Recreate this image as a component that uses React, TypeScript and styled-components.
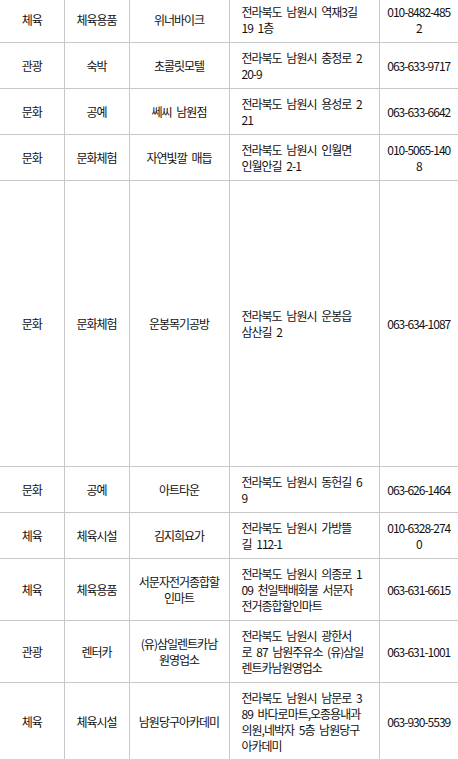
import React from 'react'
import styled, { createGlobalStyle } from 'styled-components'

const GlobalStyle = createGlobalStyle`
  html, body {
    margin: 0;
    padding: 0;
    background: #fff;
  }
  body {
    font-family: "Noto Sans CJK KR", "Noto Sans", sans-serif;
    overflow: hidden;
  }
`

const Table = styled.table`
  width: 458px;
  margin-top: -4px;
  border-collapse: collapse;
  table-layout: fixed;
  font-size: 12px;
  line-height: 16px;
  letter-spacing: -1px;
  word-spacing: 3px;
  color: #111;
`

const Col = styled.col<{ $w: number }>`
  width: ${p => p.$w}px;
`

const Row = styled.tr<{ $tall?: number }>`
  ${p => (p.$tall ? `height: ${p.$tall}px;` : '')}
`

const Cell = styled.td<{ $left?: boolean }>`
  border: 1px solid #c8c8c8;
  padding: ${p => (p.$left ? '7px 6px 6px 12px' : '7px 4px 6px')};
  text-align: ${p => (p.$left ? 'left' : 'center')};
  vertical-align: middle;
  white-space: nowrap;
  &:first-child {
    border-left: none;
  }
  &:last-child {
    border-right: none;
  }
`

const Line = styled.span`
  display: block;
`

type Place = {
  kind: string
  sub: string
  name: string[]
  addr: string[]
  tel: string[]
  tall?: number
}

const places: Place[] = [
  { kind: '체육', sub: '체육용품', name: ['위너바이크'], addr: ['전라북도 남원시 역재3길', '19 1층'], tel: ['010-8482-485', '2'] },
  { kind: '관광', sub: '숙박', name: ['초콜릿모텔'], addr: ['전라북도 남원시 충정로 2', '20-9'], tel: ['063-633-9717'] },
  { kind: '문화', sub: '공예', name: ['쎄씨 남원점'], addr: ['전라북도 남원시 용성로 2', '21'], tel: ['063-633-6642'] },
  { kind: '문화', sub: '문화체험', name: ['자연빛깔 매듭'], addr: ['전라북도 남원시 인월면', '인월안길 2-1'], tel: ['010-5065-140', '8'] },
  { kind: '문화', sub: '문화체험', name: ['운봉목기공방'], addr: ['전라북도 남원시 운봉읍', '삼산길 2'], tel: ['063-634-1087'], tall: 286 },
  { kind: '문화', sub: '공예', name: ['아트타운'], addr: ['전라북도 남원시 동헌길 6', '9'], tel: ['063-626-1464'] },
  { kind: '체육', sub: '체육시설', name: ['김지희요가'], addr: ['전라북도 남원시 가방뜰', '길 112-1'], tel: ['010-6328-274', '0'] },
  {
    kind: '체육',
    sub: '체육용품',
    name: ['서문자전거종합할', '인마트'],
    addr: ['전라북도 남원시 의종로 1', '09 천일택배화물 서문자', '전거종합할인마트'],
    tel: ['063-631-6615'],
  },
  {
    kind: '관광',
    sub: '렌터카',
    name: ['(유)삼일렌트카남', '원영업소'],
    addr: ['전라북도 남원시 광한서', '로 87 남원주유소 (유)삼일', '렌트카남원영업소'],
    tel: ['063-631-1001'],
  },
  {
    kind: '체육',
    sub: '체육시설',
    name: ['남원당구아카데미'],
    addr: ['전라북도 남원시 남문로 3', '89 바다로마트,오종용내과', '의원,네박자 5층 남원당구', '아카데미'],
    tel: ['063-930-5539'],
  },
]

const Lines = ({ items }: { items: string[] }) => (
  <>
    {items.map((t, i) => (
      <Line key={i}>{t}</Line>
    ))}
  </>
)

export default function App() {
  return (
    <>
      <GlobalStyle />
      <Table>
        <colgroup>
          <Col $w={64} />
          <Col $w={65} />
          <Col $w={100} />
          <Col $w={150} />
          <Col $w={79} />
        </colgroup>
        <tbody>
          {places.map((p, i) => (
            <Row key={i} $tall={p.tall}>
              <Cell>{p.kind}</Cell>
              <Cell>{p.sub}</Cell>
              <Cell>
                <Lines items={p.name} />
              </Cell>
              <Cell $left>
                <Lines items={p.addr} />
              </Cell>
              <Cell>
                <Lines items={p.tel} />
              </Cell>
            </Row>
          ))}
        </tbody>
      </Table>
    </>
  )
}
